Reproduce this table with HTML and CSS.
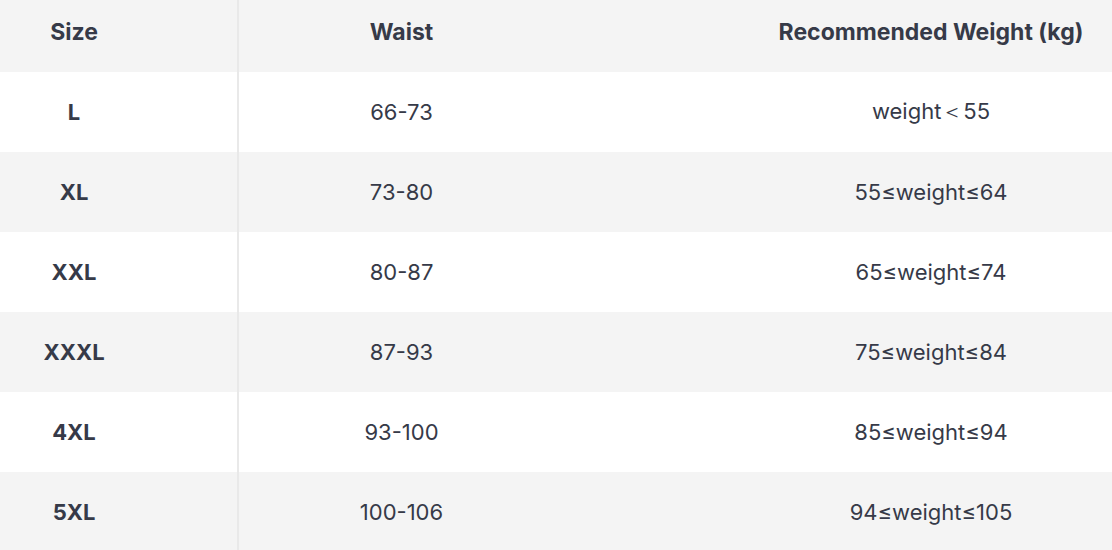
FILE: index.html
```html
<!DOCTYPE html>
<html>
<head>
<meta charset="utf-8">
<link rel="stylesheet" href="styles.css">
</head>
<body>
<div class="wrap">
<table class="size-table">
  <thead>
    <tr><th class="c1">Size</th><th class="c2">Waist</th><th class="c3">Recommended Weight (kg)</th></tr>
  </thead>
  <tbody>
    <tr><td class="c1">L</td><td class="c2">66-73</td><td class="c3">weight＜55</td></tr>
    <tr><td class="c1">XL</td><td class="c2">73-80</td><td class="c3">55≤weight≤64</td></tr>
    <tr><td class="c1">XXL</td><td class="c2">80-87</td><td class="c3">65≤weight≤74</td></tr>
    <tr><td class="c1">XXXL</td><td class="c2">87-93</td><td class="c3">75≤weight≤84</td></tr>
    <tr><td class="c1">4XL</td><td class="c2">93-100</td><td class="c3">85≤weight≤94</td></tr>
    <tr><td class="c1">5XL</td><td class="c2">100-106</td><td class="c3">94≤weight≤105</td></tr>
  </tbody>
</table>
</div>
</body>
</html>
```
FILE: styles.css
```css
html, body {
  margin: 0;
  padding: 0;
  background: #ffffff;
  overflow: hidden;
}
.wrap {
  width: 1112px;
  overflow: hidden;
}
.size-table {
  width: 1298px;
  border-collapse: collapse;
  table-layout: fixed;
  font-family: Inter, Lato, sans-serif;
  color: #363a48;
  font-size: 22px;
}
.size-table th {
  height: 63px;
  padding: 0 0 9px 0;
  font-size: 23px;
  font-weight: 700;
  background: #f4f4f4;
  text-align: center;
  vertical-align: middle;
}
.size-table td {
  height: 80px;
  padding: 0;
  text-align: center;
  vertical-align: middle;
  font-weight: 400;
}
.size-table tbody tr:nth-child(even) td {
  background: #f4f4f4;
}
.size-table .c1 {
  width: 148px;
  padding-right: 89px;
  border-right: 2px solid #e9e9e9;
  font-weight: 700;
}
.size-table .c2 {
  width: 325px;
}
.size-table .c3 {
  width: 734px;
}
```
